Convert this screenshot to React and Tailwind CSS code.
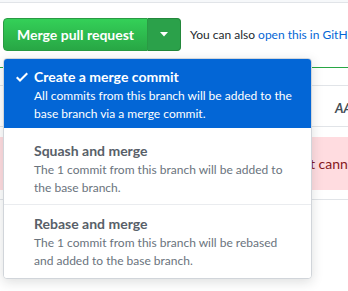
import React from 'react';

const font = { fontFamily: 'Lato, "Noto Sans", sans-serif' };

const MenuItem = ({ title, desc, selected, className }) => (
  <div
    className={`relative pl-[30px] pr-[12px] ${selected ? 'bg-[#0366d6] text-white' : 'bg-white border-b border-[#eaecef]'} ${className}`}
  >
    {selected && (
      <svg
        className="absolute left-[12px] top-[10px]"
        width="12"
        height="16"
        viewBox="0 0 12 16"
        fill="white"
      >
        <path d="M12 5l-8 8-4-4 1.5-1.5L4 10l6.5-6.5L12 5z" />
      </svg>
    )}
    <div className={`text-[14px] leading-[20px] font-bold ${selected ? 'text-white' : 'text-[#586069]'}`}>
      {title}
    </div>
    <div className={`text-[12px] leading-[18px] ${selected ? 'text-white' : 'text-[#6a737d]'}`}>{desc}</div>
  </div>
);

const App = () => {
  return (
    <div className="relative w-[348px] h-[291px] overflow-hidden bg-white" style={font}>
      <div className="h-[2px] bg-[#f6f8fa] border-b border-[#e1e4e8] box-content" />

      <div className="mt-[15px] ml-[3px] flex items-center whitespace-nowrap">
        <div className="flex h-[33px]">
          <button className="w-[145px] h-full rounded-l-[4px] bg-gradient-to-b from-[#34d058] to-[#28a745] border border-[#2a9a44] text-white text-[14px] font-bold">
            Merge pull request
          </button>
          <button className="w-[33px] h-full rounded-r-[4px] bg-[#2ba14a] border border-l-0 border-[#23873b] flex items-center justify-center">
            <svg width="8" height="5" viewBox="0 0 8 5">
              <path d="M0 0h8L4 4.5z" fill="white" />
            </svg>
          </button>
        </div>
        <span className="ml-[9px] text-[12px] text-[#24292e]">
          You can also <span className="text-[#0366d6]">open this in GitHub Desktop</span>
        </span>
      </div>

      <div className="mt-[16px] border-t border-[#28a745]">
        <div className="h-[18px] border-b border-[#e1e4e8]" />
        <div className="h-[41px] border-b border-[#e1e4e8] flex items-center justify-end pt-[6px]">
          <span className="text-[13px] font-bold italic text-[#444d56] mr-[-4px]">AA</span>
        </div>
        <div className="mt-[10px] h-[53px] bg-[#ffdce0] flex items-center">
          <span className="ml-[310px] text-[14px] text-[#86181d] whitespace-nowrap">t cannot be rebased</span>
        </div>
        <div className="h-[10px] border-b border-[#e1e4e8]" />
      </div>

      <div className="absolute left-[3px] top-[58px] w-[309px] rounded-[4px] border border-[#d1d5da] bg-white shadow-[0_3px_12px_rgba(27,31,35,0.15)] overflow-hidden">
        <MenuItem
          selected
          className="pt-[8px] pb-[5px]"
          title="Create a merge commit"
          desc="All commits from this branch will be added to the base branch via a merge commit."
        />
        <MenuItem
          className="pt-[13px] pb-[7px]"
          title="Squash and merge"
          desc="The 1 commit from this branch will be added to the base branch."
        />
        <MenuItem
          className="pt-[9px] pb-[8px] border-b-0"
          title="Rebase and merge"
          desc="The 1 commit from this branch will be rebased and added to the base branch."
        />
      </div>
    </div>
  );
};

export default App;
